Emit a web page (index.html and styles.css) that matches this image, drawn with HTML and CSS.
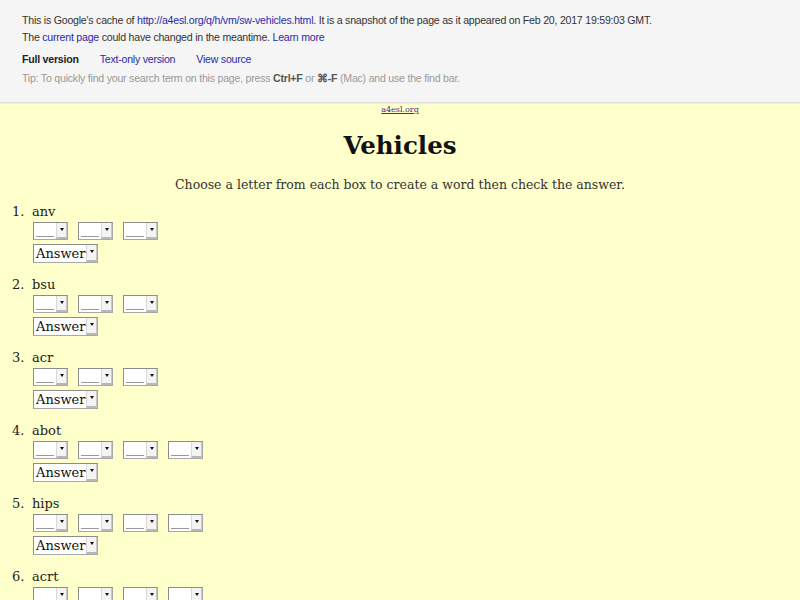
FILE: index.html
```html
<!DOCTYPE html>
<html>
<head>
<meta charset="utf-8">
<link rel="stylesheet" href="styles.css">
</head>
<body>
<div class="cache-head">
  <div class="line">This is Google's cache of <a href="#">http://a4esl.org/q/h/vm/sw-vehicles.html</a>. It is a snapshot of the page as it appeared on Feb 20, 2017 19:59:03 GMT.</div>
  <div class="line">The <a href="#">current page</a> could have changed in the meantime. <a href="#">Learn more</a></div>
  <div class="versions"><span class="cur">Full version</span><a href="#">Text-only version</a><a href="#">View source</a></div>
  <div class="tip">Tip: To quickly find your search term on this page, press <b>Ctrl+F</b> or <b>⌘-F</b> (Mac) and use the find bar.</div>
</div>
<div class="page">
  <div class="site"><a href="#">a4esl.org</a></div>
  <h1 class="title">Vehicles</h1>
  <p class="intro">Choose a letter from each box to create a word then check the answer.</p>
  <ol class="quiz">
    <li><div class="word">anv</div>
      <div class="row"><span class="sel"><span class="val"></span><span class="btn"></span></span><span class="sel"><span class="val"></span><span class="btn"></span></span><span class="sel"><span class="val"></span><span class="btn"></span></span></div>
      <div class="row"><span class="sel ans"><span class="txt">Answer</span><span class="btn"></span></span></div></li>
    <li><div class="word">bsu</div>
      <div class="row"><span class="sel"><span class="val"></span><span class="btn"></span></span><span class="sel"><span class="val"></span><span class="btn"></span></span><span class="sel"><span class="val"></span><span class="btn"></span></span></div>
      <div class="row"><span class="sel ans"><span class="txt">Answer</span><span class="btn"></span></span></div></li>
    <li><div class="word">acr</div>
      <div class="row"><span class="sel"><span class="val"></span><span class="btn"></span></span><span class="sel"><span class="val"></span><span class="btn"></span></span><span class="sel"><span class="val"></span><span class="btn"></span></span></div>
      <div class="row"><span class="sel ans"><span class="txt">Answer</span><span class="btn"></span></span></div></li>
    <li><div class="word">abot</div>
      <div class="row"><span class="sel"><span class="val"></span><span class="btn"></span></span><span class="sel"><span class="val"></span><span class="btn"></span></span><span class="sel"><span class="val"></span><span class="btn"></span></span><span class="sel"><span class="val"></span><span class="btn"></span></span></div>
      <div class="row"><span class="sel ans"><span class="txt">Answer</span><span class="btn"></span></span></div></li>
    <li><div class="word">hips</div>
      <div class="row"><span class="sel"><span class="val"></span><span class="btn"></span></span><span class="sel"><span class="val"></span><span class="btn"></span></span><span class="sel"><span class="val"></span><span class="btn"></span></span><span class="sel"><span class="val"></span><span class="btn"></span></span></div>
      <div class="row"><span class="sel ans"><span class="txt">Answer</span><span class="btn"></span></span></div></li>
    <li><div class="word">acrt</div>
      <div class="row"><span class="sel"><span class="val"></span><span class="btn"></span></span><span class="sel"><span class="val"></span><span class="btn"></span></span><span class="sel"><span class="val"></span><span class="btn"></span></span><span class="sel"><span class="val"></span><span class="btn"></span></span></div>
      <div class="row"><span class="sel ans"><span class="txt">Answer</span><span class="btn"></span></span></div></li>
  </ol>
</div>
</body>
</html>
```

FILE: styles.css
```css
html, body { margin: 0; padding: 0; }
body { background: #ffffcc; font-family: "DejaVu Serif", serif; color: #222; }

.cache-head {
  background: #f5f5f5;
  border-bottom: 1px solid #e2e2e2;
  box-shadow: 0 1px 1px rgba(0,0,0,0.06);
  padding: 12px 22px 15px;
  font-family: "Liberation Sans", Arial, sans-serif;
  font-size: 10.6px;
  letter-spacing: -0.23px;
  line-height: 17px;
  color: #333;
  height: 75px;
}
.cache-head a { color: #2a2aa8; text-decoration: none; }
.versions { margin-top: 5px; }
.versions .cur { font-weight: bold; color: #222; margin-right: 21px; }
.versions a { margin-right: 21px; }
.tip { margin-top: 2px; color: #999; }
.tip b { color: #555; }

.site { text-align: center; font-size: 8px; line-height: 12px; padding-top: 1px; }
.site a { color: #333399; }
.title { text-align: center; font-size: 24.5px; line-height: 30px; margin: 15px 0 0; font-weight: bold; color: #111; }
.intro { text-align: center; font-size: 12.5px; line-height: 18px; margin: 15px 0 0; color: #333; }

.quiz { margin: 9px 0 0; padding: 0 0 0 12px; list-style: none; counter-reset: q; font-size: 13px; color: #222; }
.quiz li {
  counter-increment: q;
  display: grid;
  grid-template-columns: 20px auto;
  margin-bottom: 13px;
}
.quiz li::before { content: counter(q) "."; grid-column: 1; grid-row: 1; line-height: 18px; }
.quiz li > * { grid-column: 2; }
.word { line-height: 18px; }
.row { display: flex; gap: 10px; margin-top: 1px; padding-left: 1px; }
.row + .row { margin-top: 4px; }

.sel {
  display: inline-flex;
  box-sizing: border-box;
  width: 35px;
  height: 18px;
  background: #fff;
  border: 1px solid #a8a8a8;
  border-top-color: #8c8c8c;
  border-left-color: #8c8c8c;
}
.sel .val { flex: 1; position: relative; }
.sel .val::after {
  content: "";
  position: absolute;
  left: 2px; right: 2px; bottom: 2px;
  border-bottom: 1px solid #999;
}
.sel .btn {
  width: 11px;
  box-sizing: border-box;
  background: #f4f4f4;
  border-left: 1px solid #d8d8d8;
  border-bottom: 2px solid #b8b8b8;
  border-right: 1px solid #c8c8c8;
  position: relative;
}
.sel .btn::after {
  content: "";
  position: absolute;
  left: 3px; top: 5px;
  border-left: 2px solid transparent;
  border-right: 2px solid transparent;
  border-top: 3px solid #111;
}
.sel.ans { width: 65px; height: 19px; }
.sel.ans .txt { flex: 1; font-size: 13px; line-height: 17px; padding-left: 2px; color: #111; white-space: nowrap; overflow: hidden; }
```
